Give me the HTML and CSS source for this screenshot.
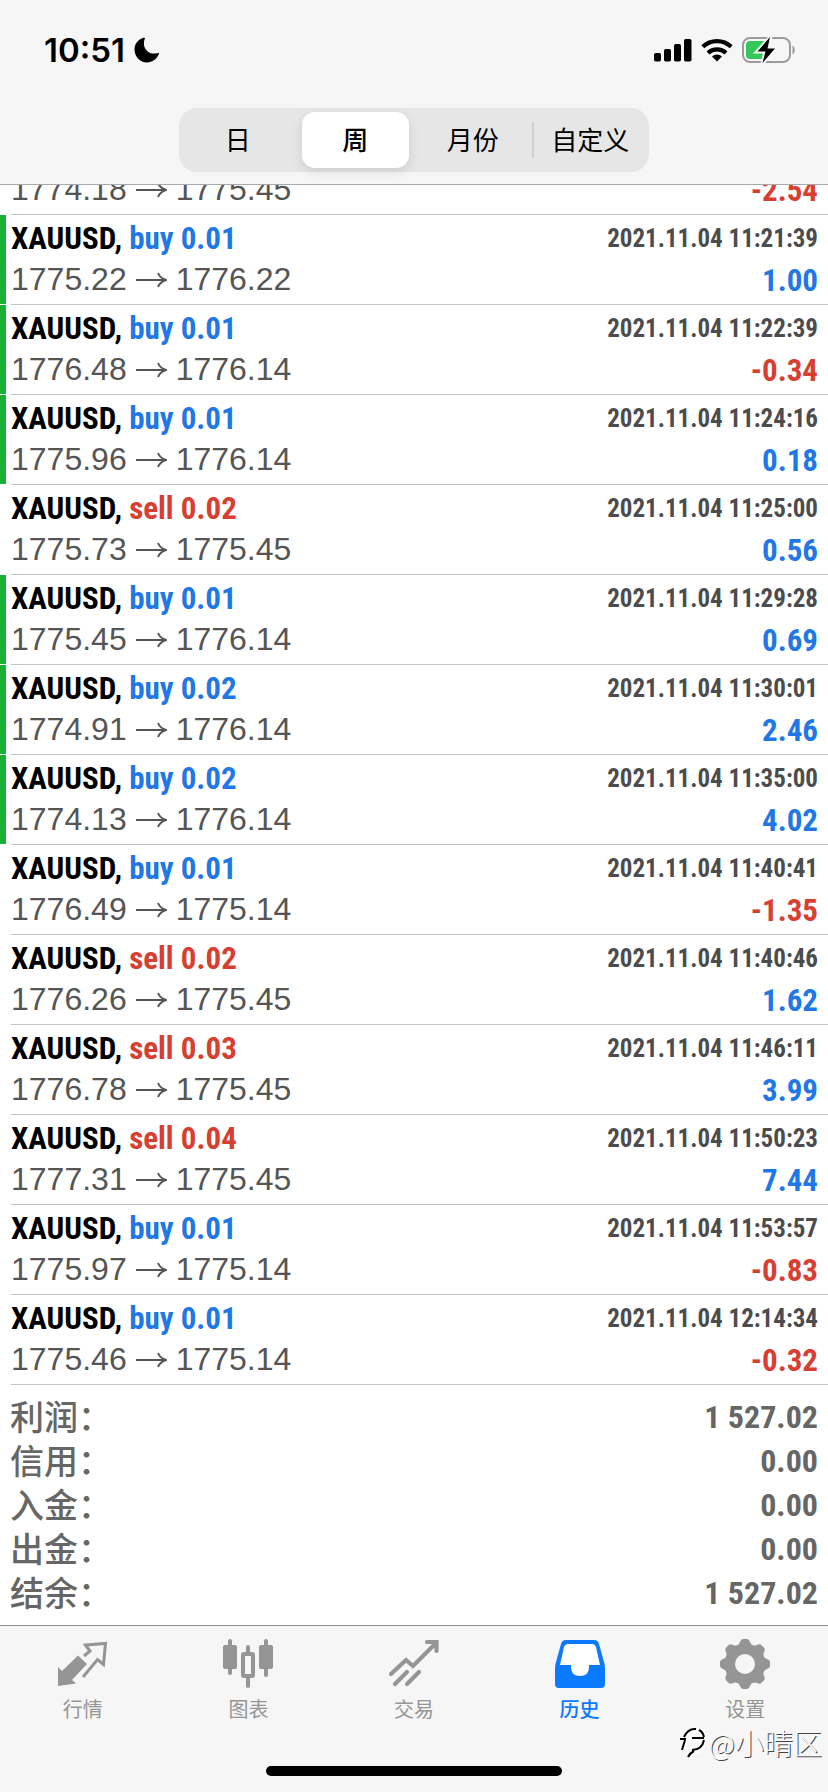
FILE: index.html
```html
<!DOCTYPE html>
<html lang="zh-CN">
<head>
<meta charset="utf-8">
<meta name="viewport" content="width=device-width, initial-scale=1">
<title>历史</title>
<link rel="stylesheet" href="styles.css">
</head>
<body>
<header class="header">
  <div class="status">
    <div class="status-left">
      <span class="clock">10:51</span>
      <svg class="moon" width="26" height="26" viewBox="0 0 26 26" aria-hidden="true"><path d="M9.500 .8C4 2.500.5 7 .5 12.500.5 19.500 6 25.500 13 25.500c5.500 0 10-3.500 12-8.700.2-.7-.3-1-1-.8-8 2.500-15-3-14-11 .1-1.200.4-2.200.9-3.200.3-.7-.4-1.300-1.400-1z"/></svg>
    </div>
    <div class="status-right">
      <svg width="38" height="24" viewBox="0 0 38 24" aria-hidden="true"><rect x="0" y="15" width="7" height="8.500" rx="1.800"/><rect x="10" y="11" width="7" height="12.500" rx="1.800"/><rect x="20" y="6" width="7" height="17.500" rx="1.800"/><rect x="30" y="1" width="7.500" height="22.500" rx="1.800"/></svg>
      <svg width="32" height="24" viewBox="0 0 32 24" aria-hidden="true"><g fill="none" stroke="#000" stroke-width="4.200"><path d="M1.800 8.800a20.500 20.500 0 0 1 28.400 0"/><path d="M7 15a13 13 0 0 1 18 0"/></g><path d="M16 23.500l-5-5a7.500 7.500 0 0 1 10 0z"/></svg>
      <svg width="54" height="28" viewBox="0 0 54 28" aria-hidden="true"><rect x="1" y="2" width="47" height="24" rx="7" fill="none" stroke="#9c9ca0" stroke-width="2"/><path d="M50.500 9.500c3 1.500 3 7.500 0 9z" fill="#9c9ca0"/><rect x="4" y="5" width="20" height="18" rx="4" fill="#35c759"/><path d="M28.500 1L15.500 15.500h8L20.500 27 33 12.500h-7.500z" stroke="#f7f6f6" stroke-width="4"/><path d="M28 1L15.500 15.500h8L20.500 27 33 12.500h-7.500z"/></svg>
    </div>
  </div>
  <div class="segments" role="group">
    <button type="button">日</button>
    <button type="button" class="selected" aria-pressed="true">周</button>
    <button type="button">月份</button>
    <button type="button" class="divided">自定义</button>
  </div>
</header>
<main class="content">
  <ul class="trades" id="trades"></ul>
  <dl class="summary">
    <div><dt>利润：</dt><dd>1 527.02</dd></div>
    <div><dt>信用：</dt><dd>0.00</dd></div>
    <div><dt>入金：</dt><dd>0.00</dd></div>
    <div><dt>出金：</dt><dd>0.00</dd></div>
    <div><dt>结余：</dt><dd>1 527.02</dd></div>
  </dl>
</main>
<footer class="footer">
  <nav class="tabs">
    <a href="#quotes"><svg viewBox="0 0 50 50" aria-hidden="true"><path d="M0 28l4 4L20 16.500l9 8.500-15 16 4 3.500L0 47z"/><path d="M26 17l6-5-4.500-6 20-1.500-2 21-6-5L25 38" fill="none" stroke="currentColor" stroke-width="3"/></svg>行情</a>
    <a href="#chart"><svg viewBox="0 0 50 50" aria-hidden="true"><rect x="0" y="6" width="14" height="24" rx="2"/><rect x="5" y="0" width="4" height="36" rx="2"/><rect x="36" y="6" width="14" height="24" rx="2"/><rect x="41" y="0" width="4" height="38" rx="2"/><rect x="20" y="15" width="10" height="22" rx="1" fill="none" stroke="currentColor" stroke-width="4"/><path d="M23 14V8a2 2 0 0 1 4 0v6zM23 38v9a2 2 0 0 0 4 0v-9z"/></svg>图表</a>
    <a href="#trade"><svg viewBox="0 0 50 50" aria-hidden="true"><g fill="none" stroke="currentColor" stroke-width="4.200" stroke-linecap="round"><path d="M2 35L17 21l7 6L47 4M38 3h9.500v9"/><path d="M6 45l12-12M18 45l12-12"/></g></svg>交易</a>
    <a href="#history" class="active" aria-current="page"><svg viewBox="0 0 50 50" aria-hidden="true"><path d="M11 1h28q4 0 5 4l5 18q1 3 1 6v16q0 4-4 4H4q-4 0-4-4V29q0-3 1-6L6 5q1-4 5-4z"/><path d="M13 5q-3 0-4 3L5 26h11v2q0 9 9 9t9-9v-2h11L41 8q-1-3-4-3z" fill="#fff"/></svg>历史</a>
    <a href="#settings"><svg viewBox="0 0 50 50" aria-hidden="true"><g id="gear"></g><circle cx="25" cy="25" r="10" fill="#f6f6f6"/></svg>设置</a>
  </nav>
  <div class="home-bar"></div>
  <div class="watermark"><svg width="28" height="32" viewBox="0 0 28 32" aria-hidden="true"><g fill="none"><path stroke="#fff" stroke-width="5" d="M3 14h22M6 24V12q3-9 12-8M20 5q9 7 3 16-5 6-13 9"/><path stroke="#000" stroke-width="2" d="M1 13h6M13 12h12M3 24l3-10M5 11Q9 2 17 3M20 4q4 2 5 7M25 14q-2 10-12 10M9 31q2-4 6-6"/></g></svg><span>@小晴区</span></div>
</footer>
<script src="app.js"></script>
</body>
</html>
```
FILE: styles.css
```css
* { box-sizing: border-box; }
body {
  margin: 0;
  height: 100vh;
  display: flex;
  flex-direction: column;
  background: #fff;
  color: #000;
  font-family: "Liberation Sans", "Noto Sans CJK SC", sans-serif;
}
.header {
  flex: none;
  display: flex;
  flex-direction: column;
  align-items: center;
  gap: 32px;
  padding: 24px 0 12px;
  background: #f7f6f6;
  border-bottom: 1px solid #a9a9ab;
}
.status {
  width: 100%;
  height: 52px;
  padding: 0 32px 0 44px;
  display: flex;
  align-items: center;
  justify-content: space-between;
}
.status-left, .status-right { display: flex; align-items: center; gap: 9px; }
.clock { font: 600 33px/52px Inter, sans-serif; }
.segments {
  display: grid;
  grid-template-columns: repeat(4, 1fr);
  width: 470px;
  max-width: 100%;
  height: 64px;
  padding: 4px 0;
  border-radius: 18px;
  background: #e7e6e7;
}
.segments button {
  border: 0;
  padding: 0 0 2px;
  background: none;
  border-radius: 13px;
  color: #000;
  font: 400 26px/54px "Noto Sans CJK SC", sans-serif;
  position: relative;
}
.segments .selected {
  margin: 0 5px;
  background: #fff;
  font-weight: 500;
  box-shadow: 0 4px 12px #0000001c;
}
.segments .divided::before {
  content: "";
  position: absolute;
  left: 0;
  top: 10px;
  bottom: 10px;
  width: 2px;
  background: #cfced0;
}
.content { flex: 1; min-height: 0; display: flex; flex-direction: column; }
.trades {
  flex: 1;
  min-height: 0;
  overflow: hidden;
  margin: 0;
  padding: 0;
  list-style: none;
  display: flex;
  flex-direction: column;
  justify-content: flex-end;
}
.trade { flex: none; display: flex; }
.mark { width: 6px; margin-bottom: 1px; }
.marked .mark { background: #18b136; }
.trade-body {
  flex: 1;
  margin-left: 5px;
  padding: 3px 10px 4px 0;
  border-bottom: 1px solid #c3c3c5;
}
.line { display: flex; justify-content: space-between; height: 41px; line-height: 41px; }
.symbol, .time, .profit, .summary dd {
  font-family: "Liberation Sans Narrow", "Roboto Condensed", "Roboto", sans-serif;
  font-weight: 700;
}
.symbol { font-size: 31px; }
.time { font-size: 25px; color: #4c4c4e; }
.prices { font-size: 32px; color: #555; display: flex; align-items: center; gap: 9px; }
.profit { font-size: 31px; line-height: 43px; }
.buy, .gain { color: #1f78e6; }
.sell, .loss { color: #d63f31; }
.summary {
  flex: none;
  margin: 0;
  padding: 9px 10px 11px;
  color: #666;
}
.summary div { display: flex; justify-content: space-between; height: 44px; line-height: 46px; }
.summary dt { font: 500 34px/44px "Noto Sans CJK SC", sans-serif; }
.summary dd { margin: 0; font-size: 32px; }
.footer {
  flex: none;
  position: relative;
  border-top: 1px solid #929294;
  background: #f6f6f6;
}
.tabs { display: flex; height: 140px; padding-top: 13px; }
.tabs a {
  flex: 1;
  display: flex;
  flex-direction: column;
  align-items: center;
  gap: 5px;
  color: #959595;
  text-decoration: none;
  font: 400 20px/30px "Noto Sans CJK SC", sans-serif;
}
.tabs svg { width: 50px; height: 50px; fill: currentColor; }
.tabs .active { color: #0c7aff; font-weight: 500; }
.home-bar {
  width: 296px;
  height: 10px;
  margin: 0 auto 16px;
  border-radius: 5px;
  background: #000;
}
.watermark {
  position: absolute;
  right: 6px;
  top: 98px;
  display: flex;
  align-items: center;
  gap: 2px;
  color: #fafafa;
  font: 300 29px/36px "Noto Sans CJK SC", sans-serif;
  text-shadow: 1px 1px 0 #444;
}
```
FILE: app.js
```js
// type, volume, open, close, time, profit, marked
const trades = [
  ["buy", "0.01", "1775.22", "1776.22", "2021.11.04 11:21:39", "1.00", 1],
  ["buy", "0.01", "1776.48", "1776.14", "2021.11.04 11:22:39", "-0.34", 1],
  ["buy", "0.01", "1775.96", "1776.14", "2021.11.04 11:24:16", "0.18", 1],
  ["sell", "0.02", "1775.73", "1775.45", "2021.11.04 11:25:00", "0.56", 0],
  ["buy", "0.01", "1775.45", "1776.14", "2021.11.04 11:29:28", "0.69", 1],
  ["buy", "0.02", "1774.91", "1776.14", "2021.11.04 11:30:01", "2.46", 1],
  ["buy", "0.02", "1774.13", "1776.14", "2021.11.04 11:35:00", "4.02", 1],
  ["buy", "0.01", "1776.49", "1775.14", "2021.11.04 11:40:41", "-1.35", 0],
  ["sell", "0.02", "1776.26", "1775.45", "2021.11.04 11:40:46", "1.62", 0],
  ["sell", "0.03", "1776.78", "1775.45", "2021.11.04 11:46:11", "3.99", 0],
  ["sell", "0.04", "1777.31", "1775.45", "2021.11.04 11:50:23", "7.44", 0],
  ["buy", "0.01", "1775.97", "1775.14", "2021.11.04 11:53:57", "-0.83", 0],
  ["buy", "0.01", "1775.46", "1775.14", "2021.11.04 12:14:34", "-0.32", 0]
];
const arrow = '<svg width="31" height="16" viewBox="0 0 31 16" aria-label="→"><path d="M0 8h29M22 1q2 5 8 7-6 2-8 7" fill="none" stroke="#555" stroke-width="2"/></svg>';
const result = (open, close, profit) => `<div class="line"><span class="prices">${open}${arrow}${close}</span><span class="profit ${profit[0] === "-" ? "loss" : "gain"}">${profit}</span></div>`;
const row = (marked, body) => `<li class="trade${marked ? " marked" : ""}"><span class="mark"></span><div class="trade-body">${body}</div></li>`;

// The list is scrolled: only the result line of the first trade is in view
document.getElementById("trades").innerHTML =
  row(0, result("1774.18", "1775.45", "-2.54")) +
  trades.map(([type, vol, open, close, time, profit, marked]) => row(marked,
    `<div class="line"><span class="symbol">XAUUSD, <span class="${type}">${type} ${vol}</span></span><time class="time">${time}</time></div>` +
    result(open, close, profit))).join("");

// Eight-toothed gear
let teeth = '<circle cx="25" cy="25" r="20"/>';
for (let i = 0; i < 8; i++) {
  teeth += `<path d="M16 7Q19 6 20 3Q21 0 23 0H27Q29 0 30 3Q31 6 34 7z" transform="rotate(${i * 45} 25 25)"/>`;
}
document.getElementById("gear").innerHTML = teeth;
```
